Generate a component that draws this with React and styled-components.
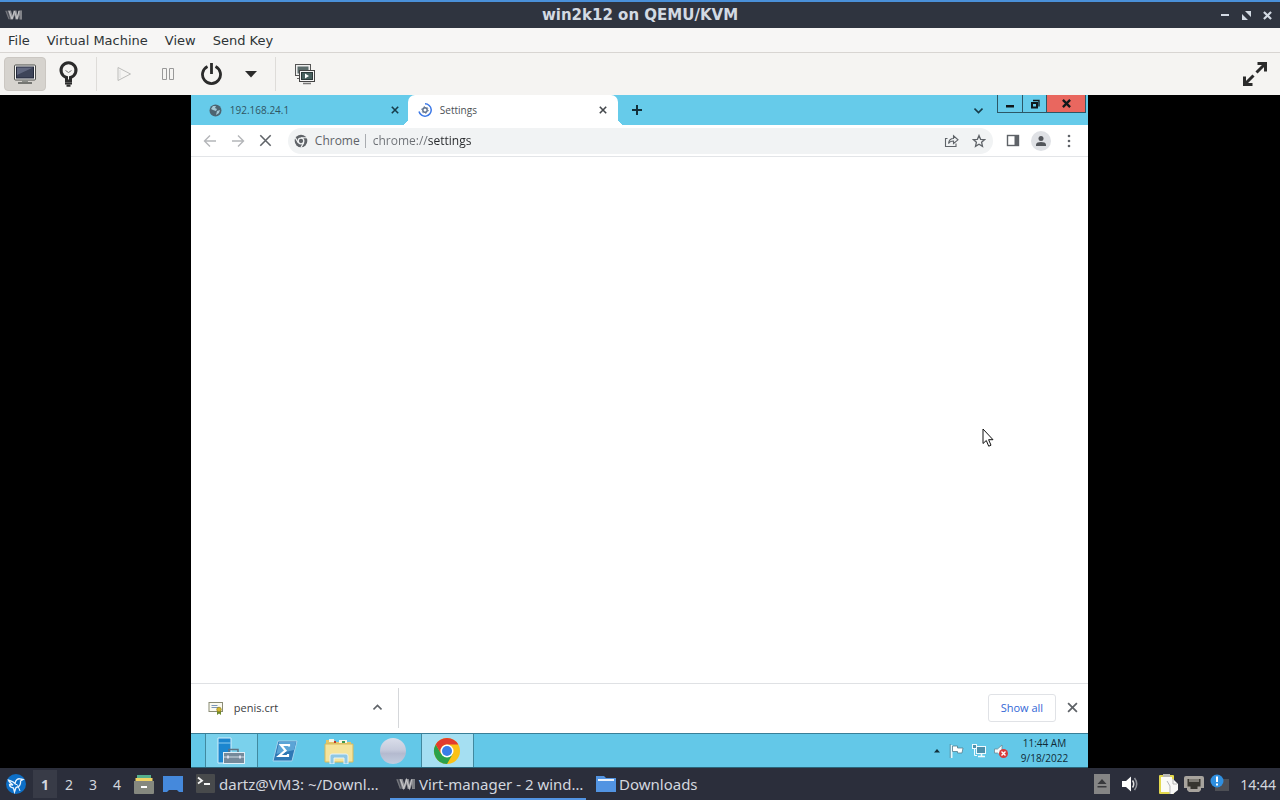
import React from "react";
import styled, { createGlobalStyle } from "styled-components";

const GlobalStyle = createGlobalStyle`
  * {
    box-sizing: border-box;
  }
  body {
    margin: 0;
    background: #000;
  }
  button, input {
    font: inherit;
    color: inherit;
    border: none;
    background: none;
    padding: 0;
    margin: 0;
  }
  svg {
    display: block;
    flex: none;
  }
`;

const Screen = styled.div`
  display: flex;
  flex-direction: column;
  height: 100vh;
  overflow: hidden;
  font-family: "DejaVu Sans", sans-serif;
`;

/* ---- host window ---- */

const TitleBar = styled.header`
  display: grid;
  grid-template-columns: 1fr auto 1fr;
  align-items: center;
  flex: none;
  height: 28px;
  padding: 0 5px;
  border-top: 2px solid #4a90d9;
  background: #2f343f;
  color: #d3dae3;
`;

const WindowTitle = styled.h1`
  margin: 0;
  font-size: 15px;
  line-height: 26px;
  font-weight: bold;
`;

const TitleButtons = styled.div`
  display: flex;
  justify-content: flex-end;
  gap: 5px;
`;

const TitleButton = styled.button`
  display: grid;
  place-items: center;
  width: 16px;
  height: 20px;
`;

const MenuBar = styled.nav`
  display: flex;
  flex: none;
  gap: 1px;
  height: 25px;
  background: #f7f6f5;
  border-bottom: 1px solid #d8d5d2;
`;

const MenuItem = styled.button`
  padding: 1px 8px 0;
  font-size: 13px;
  line-height: 24px;
  color: #2e3436;
`;

const ToolBar = styled.div`
  display: flex;
  align-items: center;
  flex: none;
  gap: 2px;
  height: 42px;
  padding: 0 4px;
  background: #f5f4f2;
  color: #2b2b2b;
`;

const ToolButton = styled.button`
  display: grid;
  place-items: center;
  width: ${p => (p.$narrow ? 32 : 42)}px;
  height: 34px;
  border-radius: 4px;
  background: ${p => (p.$active ? "#d6d3ce" : "transparent")};
  border: 1px solid ${p => (p.$active ? "#cbc7c2" : "transparent")};
  color: ${p => (p.disabled ? "#bcbcba" : "#2b2b2b")};
`;

const ToolDivider = styled.span`
  width: 1px;
  height: 34px;
  margin: 0 ${p => (p.$wide ? 6 : 4)}px;
  background: #dedcd9;
`;

const Spacer = styled.span`
  flex: 1;
`;

const Viewer = styled.main`
  display: flex;
  justify-content: center;
  flex: 1;
  min-height: 0;
  padding-right: 1px;
  background: #000;
`;

/* ---- guest desktop ---- */

const Guest = styled.div`
  display: flex;
  flex-direction: column;
  height: 100%;
  aspect-ratio: 4 / 3;
  background: #fff;
  font-family: "Open Sans", "Noto Sans", sans-serif;
`;

const TabStrip = styled.div`
  display: flex;
  flex: none;
  height: 30px;
  background: #66cbea;
  color: #24424e;
`;

const Tab = styled.div`
  position: relative;
  display: flex;
  align-items: center;
  gap: 8px;
  width: ${p => (p.$active ? 210 : 217)}px;
  padding: ${p => (p.$active ? "0 8px 0 10px" : "0 6px 0 18px")};
  border-radius: 7px 7px 0 0;
  background: ${p => (p.$active ? "#fff" : "transparent")};
  color: ${p => (p.$active ? "#4b4f54" : "#2f5563")};
  font-size: 10px;

  &::before,
  &::after {
    content: "";
    display: ${p => (p.$active ? "block" : "none")};
    position: absolute;
    bottom: 0;
    width: 7px;
    height: 7px;
  }
  &::before {
    right: 100%;
    background: radial-gradient(circle at 0 0, transparent 7px, #fff 7px);
  }
  &::after {
    left: 100%;
    background: radial-gradient(circle at 100% 0, transparent 7px, #fff 7px);
  }
`;

const TabTitle = styled.span`
  flex: 1;
`;

const IconButton = styled.button`
  display: grid;
  place-items: center;
  width: ${p => p.$size || 28}px;
  height: ${p => p.$size || 28}px;
  border-radius: 50%;
  color: ${p => p.$color || "#5f6368"};
`;

const TabTool = styled(IconButton)`
  align-self: center;
  margin: 0 ${p => (p.$last ? 5 : 0)}px 0 5px;
`;

const Captions = styled.div`
  display: flex;
  height: 18px;
  margin-right: 2px;
  border: 1px solid #2c5766;
  border-top: none;
`;

const Caption = styled.button`
  display: grid;
  place-items: center;
  width: ${p => (p.$close ? 39 : 24)}px;
  background: ${p => (p.$close ? "#e9675f" : "transparent")};
  border-left: ${p => (p.$first ? "none" : "1px solid #2c5766")};
  color: #10181b;
`;

const NavBar = styled.div`
  display: flex;
  align-items: center;
  flex: none;
  height: 32px;
  padding: 0 5px;
  border-bottom: 1px solid #e3e5e8;
`;

const Omnibox = styled.label`
  display: flex;
  align-items: center;
  flex: 1;
  height: 26px;
  margin: 0 6px 0 8px;
  padding: 0 0 0 6px;
  border-radius: 13px;
  background: #f1f3f4;
  color: #5f6368;
  font-size: 12px;
`;

const Scheme = styled.span`
  margin-left: 7px;
  padding-right: 5px;
  line-height: 14px;
  border-right: 1px solid #a9acb0;
`;

const Address = styled.input`
  flex: 1;
  min-width: 0;
  margin-left: 7px;
  color: transparent;
  background: linear-gradient(90deg, #6b6f74 54px, #26282b 54px);
  background-clip: text;
  outline: none;
`;

const Avatar = styled.span`
  display: grid;
  place-items: center;
  width: 20px;
  height: 20px;
  border-radius: 50%;
  background: #dfe1e5;
`;

const Page = styled.section`
  position: relative;
  flex: 1;
`;

const Pointer = styled.svg`
  position: absolute;
  left: 88.2%;
  top: 51.6%;
`;

const DownloadBar = styled.div`
  display: flex;
  align-items: center;
  flex: none;
  height: 50px;
  padding: 0 4px 2px 17px;
  border-top: 1px solid #dfe1e4;
`;

const DownloadItem = styled.div`
  display: flex;
  align-items: center;
  gap: 10px;
  width: 191px;
  height: 40px;
  padding-right: 6px;
  border-right: 1px solid #d5d7da;
  font-size: 11px;
  color: #3c4043;
`;

const ShowAll = styled.button`
  height: 28px;
  padding: 0 12px;
  margin-right: 4px;
  border: 1px solid #e0e2e6;
  border-radius: 3px;
  color: #3367d6;
  font-size: 11px;
`;

const TaskBar = styled.div`
  display: flex;
  flex: none;
  gap: 1px;
  height: 35px;
  padding-left: 14px;
  border-top: 1px solid #3a7f98;
  border-bottom: 1px solid #2b6579;
  background: #63c8e8;
`;

const TaskIcon = styled.button`
  display: grid;
  place-items: center;
  width: 53px;
  background: ${p => (p.$lit ? "#a5dff2" : p.$open ? "#7ad1ec" : "transparent")};
  border: solid ${p => (p.$lit || p.$open ? "#41899f" : "transparent")};
  border-width: 0 1px;
`;

const Tray = styled.div`
  display: flex;
  align-items: center;
  gap: 6px;
  padding-right: 20px;
`;

const TrayClock = styled.time`
  margin-left: 6px;
  font-size: 10px;
  line-height: 15px;
  text-align: center;
  color: #102b36;
`;

/* ---- host panel ---- */

const Panel = styled.footer`
  display: flex;
  align-items: center;
  flex: none;
  height: 32px;
  padding: 0 4px 0 6px;
  background: #2b2e3b;
  color: #d3d7df;
  font-family: "Noto Sans", "Open Sans", sans-serif;
  font-size: 14px;
`;

const Desktops = styled.div`
  display: flex;
  margin: 0 5px 0 7px;
`;

const DesktopButton = styled.button`
  width: 24px;
  height: 28px;
  background: ${p => (p.$current ? "#383b47" : "transparent")};
  font-weight: ${p => (p.$current ? "bold" : "normal")};
`;

const Launchers = styled.div`
  display: flex;
  align-items: center;
  gap: 9px;
  margin-right: 7px;
`;

const Task = styled.button`
  display: flex;
  align-items: center;
  gap: 3px;
  width: 196px;
  height: 32px;
  margin-right: 4px;
  padding: 2px 6px 0;
  border-bottom: 2px solid ${p => (p.$current ? "#5294e2" : "transparent")};
  font-size: 15px;
  white-space: nowrap;
`;

const Status = styled.div`
  display: flex;
  align-items: center;
  gap: ${p => (p.$wide ? 10 : 6)}px;
  margin-right: ${p => (p.$wide ? 18 : 10)}px;
`;

const VmLogo = ({ width = 18, height = 12 }) => (
  <svg width={width} height={height} viewBox="0 0 18 12" fill="none">
    <path d="M0 1.500h4l3 9H3.500z" fill="#4b4e58" />
    <path d="M3 1.500h3l1.500 5 1-5h3l1 5 1-5H17v9h-2.500V6L13 10.500h-2.500L9.500 6l-1.500 4.500H5.500z" fill="#8d8e93" />
    <path d="M4 2l3 8 2.500-8 2.500 8 2-8" stroke="#c6c6c9" strokeWidth="1" />
    <path d="M1 2l3 8M16 2v8" stroke="#77797f" strokeWidth="1" />
  </svg>
);

const Cross = ({ size = 8, weight = 1.6 }) => (
  <svg width={size} height={size} viewBox="0 0 10 10">
    <path d="M1 1l8 8M9 1L1 9" stroke="currentColor" strokeWidth={weight} />
  </svg>
);

const Monitor = () => (
  <svg width="24" height="22" viewBox="0 0 24 22">
    <rect x="1.500" y="2" width="21" height="15" rx="1" fill="#f6f6f4" stroke="#4b4d4a" />
    <rect x="3.500" y="4" width="17" height="11" fill="#3e4559" stroke="#22283a" />
    <path d="M4 4.500h16L4 12z" fill="#79809a" opacity=".6" />
    <path d="M9 17h6v2H9z" fill="#8b8d89" />
    <path d="M5 20h14" stroke="#555753" strokeWidth="1.500" />
  </svg>
);

const Bulb = () => (
  <svg width="22" height="26" viewBox="0 0 22 26" fill="none" stroke="currentColor">
    <path d="M8.500 20v-3.500a7.500 7.500 0 1 1 4 0V20z" strokeWidth="3" />
    <path d="M7.500 9.500l3 2 3-2" strokeWidth="1" stroke="#777" />
    <path d="M7 22.500h7M8.500 24.800h4" strokeWidth="2" />
  </svg>
);

const Play = () => (
  <svg width="16" height="16" viewBox="0 0 16 16" fill="none" stroke="currentColor">
    <path d="M2 1.500v13L14.500 8z" />
    <path d="M4 4v8" stroke="#ddd" />
  </svg>
);

const Pause = () => (
  <svg width="14" height="14" viewBox="0 0 14 14" fill="none" stroke="#999">
    <path d="M1.500 1.500h4v11h-4zM8.500 1.500h4v11h-4z" />
  </svg>
);

const Power = () => (
  <svg width="22" height="24" viewBox="0 0 22 24" fill="none" stroke="currentColor" strokeWidth="2.800">
    <path d="M6.500 4.500a9 9 0 1 0 8 0M10.500 1v11" />
  </svg>
);

const Snapshots = () => (
  <svg width="22" height="22" viewBox="0 0 22 22">
    <rect x="1.500" y="1.500" width="15" height="11" fill="#eee" stroke="#555" />
    <rect x="3.500" y="3.500" width="11" height="7" fill="#5b6b6b" />
    <path d="M3 15.500h4" stroke="#666" />
    <rect x="5.500" y="7.500" width="15" height="11" fill="#f5f5f5" stroke="#444" />
    <rect x="7.500" y="9.500" width="11" height="7" fill="#47605e" stroke="#2b3838" />
    <path d="M11 10.500v5l4-2.500z" fill="#fff" />
    <path d="M9 20.500h8" stroke="#777" strokeWidth="1.500" />
  </svg>
);

const Fullscreen = () => (
  <svg width="26" height="26" viewBox="0 0 26 26" stroke="currentColor" fill="none">
    <path d="M14.500 11.500L23 3M11.500 14.500L3 23" strokeWidth="3" />
    <path d="M15.500 2.500h8v8M10.500 23.500h-8v-8" strokeWidth="3" />
  </svg>
);

const Globe = () => (
  <svg width="13" height="13" viewBox="0 0 13 13">
    <circle cx="6.500" cy="6.500" r="6" fill="#4d6470" />
    <path d="M2 5l2-3 3 0-1 2 2 1-1 2-3-1zM8 7l3-1-1 3-3 2z" fill="#a5c8d4" />
  </svg>
);

const SettingsSpinner = () => (
  <svg width="14" height="14" viewBox="0 0 14 14" fill="none">
    <path d="M7 .8a6.200 6.200 0 1 1-6 7.700" stroke="#3b78e7" strokeWidth="1.500" />
    <circle cx="7" cy="7" r="2.200" stroke="#5c6f8c" strokeWidth="1.400" />
    <circle cx="7" cy="7" r="3.300" stroke="#5c6f8c" strokeDasharray="1.300 2.155" />
  </svg>
);

const ChromeMono = () => (
  <svg width="14" height="14" viewBox="0 0 14 14" fill="none">
    <circle cx="7" cy="7" r="6.300" fill="#5f6368" />
    <circle cx="7" cy="7" r="2.800" fill="#5f6368" stroke="#f1f3f4" strokeWidth="1.300" />
    <path d="M7 3.800h6M4.200 8.600L1.400 3.900M9.800 8.600L7 13.400" stroke="#f1f3f4" strokeWidth="1.100" />
  </svg>
);

const Arrow = ({ flip }) => (
  <svg width="14" height="14" viewBox="0 0 14 14" fill="none" stroke="currentColor" strokeWidth="1.400">
    <path d={flip ? "M1 7h11M7 1.500L12.500 7 7 12.500" : "M13 7H2M7 1.500L1.500 7 7 12.500"} />
  </svg>
);

const Share = () => (
  <svg width="15" height="14" viewBox="0 0 15 14" fill="none" stroke="currentColor" strokeWidth="1.100">
    <path d="M3.500 4.500H1.500v8h10.500v-3" />
    <path d="M4.500 9.500c.5-3.500 2-5 5-5V1.800L14 5.800 9.500 9.500V7c-2.500 0-4 .8-5 2.500z" />
  </svg>
);

const Star = () => (
  <svg width="14" height="14" viewBox="0 0 14 14" fill="none" stroke="currentColor" strokeWidth="1.300">
    <path d="M7 1.500l1.600 3.800 4 .3-3 2.700.9 4L7 10.200l-3.500 2.100.9-4-3-2.700 4-.3z" />
  </svg>
);

const SidePanel = () => (
  <svg width="14" height="13" viewBox="0 0 14 13">
    <rect x="1.500" y="1.500" width="11" height="10" fill="none" stroke="currentColor" strokeWidth="1.400" />
    <path d="M8.500 1h4v11h-4z" fill="currentColor" />
  </svg>
);

const Person = () => (
  <svg width="12" height="12" viewBox="0 0 12 12" fill="#53565b">
    <circle cx="6" cy="3.500" r="2.500" />
    <path d="M1 11V9.500C1 7.800 3.500 7 6 7s5 .8 5 2.500V11z" />
  </svg>
);

const Chevron = ({ up }) => (
  <svg width="9" height="7" viewBox="0 0 9 7" fill="none" stroke="currentColor" strokeWidth="1.600">
    <path d={up ? "M.5 5.500l4-4 4 4" : "M.5 1.500l4 4 4-4"} />
  </svg>
);

const Certificate = () => (
  <svg width="16" height="14" viewBox="0 0 16 14">
    <rect x="1" y="1.500" width="13.500" height="9" fill="#fbfaf0" stroke="#8a8b75" />
    <path d="M3.500 4.500h6M3.500 6.500h8" stroke="#7b96b8" />
    <path d="M9 9h4v5l-2-1.500L9 14z" fill="#6c8a2e" />
    <circle cx="11" cy="8.500" r="2.300" fill="#d3b72c" stroke="#8a7a1c" strokeWidth=".6" />
  </svg>
);

const ServerManager = () => (
  <svg width="28" height="28" viewBox="0 0 28 28">
    <path d="M1 1h13v25H1z" fill="#1b86cf" stroke="#d5eefa" />
    <path d="M1 6h13" stroke="#8bcdf2" />
    <path d="M12 15v-2.500h9V15" fill="none" stroke="#5f7281" strokeWidth="1.500" />
    <rect x="6.500" y="15.500" width="21" height="11" fill="#75899a" stroke="#e0eef6" />
    <path d="M7 20h20" stroke="#d1dde4" />
    <path d="M11 18.500v3M23 18.500v3" stroke="#eef" strokeWidth="1.500" />
  </svg>
);

const PowerShell = () => (
  <svg width="26" height="22" viewBox="0 0 26 22">
    <path d="M6 1h19l-5 20H1z" fill="#2e78b5" stroke="#a5d4ee" />
    <path d="M7 2h17l-2 8L4.500 14z" fill="#5ba4d6" />
    <path d="M17 6.500V5H9l4.500 5.500L7 16h9v-2" fill="none" stroke="#fff" strokeWidth="2.200" />
  </svg>
);

const Explorer = () => (
  <svg width="30" height="26" viewBox="0 0 30 26">
    <path d="M2 2h8l2 2h15v20H2z" fill="#e3c768" />
    <path d="M5 1h5v3H5zM15 2h8v3h-8z" fill="#f8f5e4" />
    <path d="M10 3h2v2h-2z" fill="#c0392b" />
    <path d="M18 3h3v2h-3z" fill="#3c9a51" />
    <path d="M1 6h28v18H1z" fill="#f5e49c" stroke="#d7b95c" />
    <path d="M6 26v-8q0-2 2-2h14q2 0 2 2v8h-4v-6H10v6z" fill="#8fc7e4" stroke="#e3f3fb" />
  </svg>
);

const Sphere = () => (
  <svg width="28" height="28" viewBox="0 0 28 28">
    <defs>
      <linearGradient id="sphere" x1="0" y1="0" x2="0" y2="1">
        <stop offset="0" stopColor="#dadeea" />
        <stop offset=".45" stopColor="#c6cbdc" />
        <stop offset=".6" stopColor="#b4bacf" />
        <stop offset="1" stopColor="#c3cddf" />
      </linearGradient>
    </defs>
    <circle cx="14" cy="14" r="13" fill="url(#sphere)" />
  </svg>
);

const ChromeColor = () => (
  <svg width="28" height="28" viewBox="0 0 28 28">
    <circle cx="14" cy="14" r="13" fill="#fbc116" />
    <path d="M2.740 7.500A13 13 0 0 0 14 27l5.630-9.750L8.370 17.250z" fill="#2ba14b" />
    <path d="M2.740 7.500a13 13 0 0 1 22.520 0H14a6.500 6.500 0 0 0-5.630 9.750z" fill="#e33b2e" />
    <circle cx="14" cy="14" r="6.500" fill="#fff" />
    <circle cx="14" cy="14" r="5" fill="#3a7de8" />
  </svg>
);

const Flag = () => (
  <svg width="16" height="16" viewBox="0 0 16 16">
    <path d="M2.500 2v13" stroke="#e9f6fb" strokeWidth="2" />
    <path d="M3.500 3h5v2h5.500l-1 5H8.500V8.500h-5z" fill="#fff" stroke="#537e8e" strokeWidth=".8" />
    <path d="M1.200 1v14" stroke="#537e8e" strokeWidth=".7" />
  </svg>
);

const Network = () => (
  <svg width="16" height="16" viewBox="0 0 16 16" fill="#4f91ac" stroke="#f1fafd">
    <rect x="5.500" y="3.500" width="9" height="7" />
    <path d="M7 13.500h7M10.500 11v2" fill="none" strokeWidth="1.500" />
    <rect x="1.500" y="1.500" width="4" height="4" />
    <path d="M3.500 6v6.500H6" fill="none" />
  </svg>
);

const MutedSpeaker = () => (
  <svg width="16" height="16" viewBox="0 0 16 16">
    <path d="M1.500 6h3L9 2v12l-4.500-4h-3z" fill="#f3fafc" stroke="#65808b" strokeWidth=".7" />
    <circle cx="10.500" cy="10.500" r="4.500" fill="#d93a3a" />
    <path d="M8.500 8.500l4 4M12.500 8.500l-4 4" stroke="#fff" strokeWidth="1.400" />
  </svg>
);

const Bird = () => (
  <svg width="20" height="20" viewBox="0 0 20 20">
    <circle cx="10" cy="10" r="10" fill="#0d6fc7" />
    <path
      d="M2.500 6c2.500 1 5 1.500 6.500 3.500C9.500 6 12 4 14.500 5l2.500.5-2.500 1.500c.5 4-2 6-4.500 6.500L8.500 18l-1-4C5 13.500 3.500 12 3.500 10.500L7 11C5 9.500 3 8 2.500 6z"
      fill="none"
      stroke="#e8f4ff"
      strokeWidth="1.300"
    />
    <path d="M12 12l2 5M9 9.500l3 2" stroke="#e8f4ff" />
  </svg>
);

const Cabinet = () => (
  <svg width="20" height="20" viewBox="0 0 20 20">
    <path d="M3 1h14v4H3z" fill="#55b08d" />
    <path d="M1.500 4h17v4h-17z" fill="#f0d264" />
    <path d="M0 7h20v12q0 1-1 1H1q-1 0-1-1z" fill="#85887f" />
    <path d="M7 12h6v2H7z" fill="#fff" />
  </svg>
);

const DesktopGlyph = () => (
  <svg width="20" height="18" viewBox="0 0 20 18">
    <path d="M0 1h20v16h-4l-2-2H6l-2 2H0z" fill="#4589dc" />
  </svg>
);

const Terminal = () => (
  <svg width="20" height="20" viewBox="0 0 20 20">
    <rect width="19" height="19" rx="1" fill="#484a4c" />
    <path d="M2 3.500l4 3.200-4 2.800M8 10h6" stroke="#f5f5f5" strokeWidth="1.800" fill="none" />
  </svg>
);

const Folder = () => (
  <svg width="20" height="18" viewBox="0 0 20 18">
    <path d="M0 1h8l2 2h10v14H0z" fill="#5294e2" />
    <path d="M2 4h16v2H2z" fill="#e9f1fb" />
  </svg>
);

const Eject = () => (
  <svg width="16" height="20" viewBox="0 0 16 20">
    <rect width="16" height="20" fill="#858585" />
    <path d="M3.500 10L8 5l4.500 5zM3.500 12h9v1.500h-9z" fill="#38393c" />
  </svg>
);

const Speaker = () => (
  <svg width="20" height="18" viewBox="0 0 20 18">
    <path d="M2 6h4l5-4.500v15L6 12H2z" fill="#fff" />
    <path d="M12.500 5.500q2.500 3.500 0 7" stroke="#e0e0e0" strokeWidth="1.500" fill="none" />
    <path d="M14.500 3q4.500 6 0 12" stroke="#909299" strokeWidth="1.500" fill="none" />
  </svg>
);

const Clipboard = () => (
  <svg width="20" height="22" viewBox="0 0 20 22">
    <rect x="1" y="2" width="15" height="19" rx="1" fill="#e3d84d" />
    <path d="M3 4h11v15H3z" fill="#fbfbf6" />
    <path d="M5 1h7v3H5z" fill="#b8b8b4" />
    <path d="M9 8l6-2 5 5v6l-5 4h-3z" fill="#f8f8f8" />
    <path d="M9 8l3 5v8M15 6v5h4" stroke="#b5b5b5" fill="none" />
  </svg>
);

const Ethernet = () => (
  <svg width="20" height="18" viewBox="0 0 20 18">
    <path d="M2 1h16q2 0 2 2v10h-3v2l-2 2H5l-2-2v-2H0V3q0-2 2-2z" fill="#a7a39d" />
    <path d="M3.500 4h13v7.500h-3V14h-7v-2.500h-3z" fill="#37352f" />
    <path d="M6 4v3M8 4v3M10 4v3M12 4v3M14 4v3" stroke="#c4c0b8" />
  </svg>
);

const Updates = () => (
  <svg width="20" height="20" viewBox="0 0 20 20">
    <rect x="5" y="5" width="14" height="12" fill="#4d4f55" />
    <circle cx="7" cy="7" r="6.500" fill="#2f8fe0" />
    <path d="M7 2.500v5.500M7 9.500v2" stroke="#fff" strokeWidth="2" />
  </svg>
);

const menus = ["File", "Virtual Machine", "View", "Send Key"];

const GuestDesktop = () => (
  <Guest>
    <TabStrip>
      <Tab>
        <Globe />
        <TabTitle>192.168.24.1</TabTitle>
        <IconButton $size={14} $color="#173d4b" aria-label="Close tab">
          <Cross weight={2} />
        </IconButton>
      </Tab>
      <Tab $active>
        <SettingsSpinner />
        <TabTitle>Settings</TabTitle>
        <IconButton $size={14} $color="#44484c" aria-label="Close tab">
          <Cross weight={2} />
        </IconButton>
      </Tab>
      <TabTool $color="#12303b" aria-label="New tab">
        <svg width="12" height="12" viewBox="0 0 12 12">
          <path d="M6 1v10M1 6h10" stroke="currentColor" strokeWidth="2" />
        </svg>
      </TabTool>
      <Spacer />
      <TabTool $last $color="#173d4b" aria-label="Search tabs">
        <Chevron />
      </TabTool>
      <Captions>
        <Caption $first aria-label="Minimize">
          <svg width="10" height="10" viewBox="0 0 10 10">
            <path d="M1 6h8v2.500H1z" fill="currentColor" />
          </svg>
        </Caption>
        <Caption aria-label="Restore">
          <svg width="10" height="10" viewBox="0 0 10 10" fill="none" stroke="currentColor">
            <path d="M3 1.500h6v6" strokeWidth="1.300" />
            <path d="M2 4h5v4.500H2z" strokeWidth="2" />
          </svg>
        </Caption>
        <Caption $close aria-label="Close">
          <Cross size={9} weight={2.6} />
        </Caption>
      </Captions>
    </TabStrip>

    <NavBar>
      <IconButton $color="#b4b6b9" aria-label="Back">
        <Arrow />
      </IconButton>
      <IconButton $color="#b4b6b9" aria-label="Forward">
        <Arrow flip />
      </IconButton>
      <IconButton aria-label="Stop loading">
        <Cross size={13} weight={1.2} />
      </IconButton>
      <Omnibox>
        <ChromeMono />
        <Scheme>Chrome</Scheme>
        <Address type="text" aria-label="Address" defaultValue="chrome://settings" />
        <IconButton aria-label="Share">
          <Share />
        </IconButton>
        <IconButton aria-label="Bookmark">
          <Star />
        </IconButton>
      </Omnibox>
      <IconButton aria-label="Side panel">
        <SidePanel />
      </IconButton>
      <IconButton aria-label="Profile">
        <Avatar>
          <Person />
        </Avatar>
      </IconButton>
      <IconButton aria-label="More">
        <svg width="4" height="14" viewBox="0 0 4 14" fill="currentColor">
          <circle cx="2" cy="2" r="1.300" />
          <circle cx="2" cy="7" r="1.300" />
          <circle cx="2" cy="12" r="1.300" />
        </svg>
      </IconButton>
    </NavBar>

    <Page>
      <Pointer width="12" height="20" viewBox="0 0 12 20">
        <path d="M1 1v14.500l3.300-3 2.400 5.700 2.300-1-2.400-5.500H11z" fill="#fff" stroke="#111" />
      </Pointer>
    </Page>

    <DownloadBar>
      <DownloadItem>
        <Certificate />
        <TabTitle>penis.crt</TabTitle>
        <IconButton aria-label="Download options">
          <Chevron up />
        </IconButton>
      </DownloadItem>
      <Spacer />
      <ShowAll>Show all</ShowAll>
      <IconButton $size={24} aria-label="Close downloads">
        <Cross size={11} />
      </IconButton>
    </DownloadBar>

    <TaskBar>
      <TaskIcon $open aria-label="Server Manager">
        <ServerManager />
      </TaskIcon>
      <TaskIcon aria-label="PowerShell">
        <PowerShell />
      </TaskIcon>
      <TaskIcon aria-label="File Explorer">
        <Explorer />
      </TaskIcon>
      <TaskIcon aria-label="Application">
        <Sphere />
      </TaskIcon>
      <TaskIcon $lit aria-label="Chrome">
        <ChromeColor />
      </TaskIcon>
      <Spacer />
      <Tray>
        <svg width="12" height="5" viewBox="0 0 12 5">
          <path d="M3 4.500L6 1l3 3.500z" fill="#12303b" />
        </svg>
        <Flag />
        <Network />
        <MutedSpeaker />
        <TrayClock>
          11:44 AM
          <br />
          9/18/2022
        </TrayClock>
      </Tray>
    </TaskBar>
  </Guest>
);

const App = () => (
  <Screen>
    <GlobalStyle />
    <TitleBar>
      <VmLogo />
      <WindowTitle>win2k12 on QEMU/KVM</WindowTitle>
      <TitleButtons>
        <TitleButton aria-label="Minimize">
          <svg width="8" height="8" viewBox="0 0 8 8">
            <path d="M0 3h8v2H0z" fill="currentColor" />
          </svg>
        </TitleButton>
        <TitleButton aria-label="Maximize">
          <svg width="9" height="9" viewBox="0 0 9 9" fill="currentColor">
            <path d="M3 0h6v6zM0 3l6 6H0z" />
          </svg>
        </TitleButton>
        <TitleButton aria-label="Close">
          <Cross size={9} weight={2.4} />
        </TitleButton>
      </TitleButtons>
    </TitleBar>

    <MenuBar>
      {menus.map(menu => (
        <MenuItem key={menu}>{menu}</MenuItem>
      ))}
    </MenuBar>

    <ToolBar>
      <ToolButton $active aria-label="Console">
        <Monitor />
      </ToolButton>
      <ToolButton aria-label="Details">
        <Bulb />
      </ToolButton>
      <ToolDivider />
      <ToolButton disabled aria-label="Run">
        <Play />
      </ToolButton>
      <ToolButton disabled aria-label="Pause">
        <Pause />
      </ToolButton>
      <ToolButton aria-label="Shut down">
        <Power />
      </ToolButton>
      <ToolButton $narrow aria-label="Shut down menu">
        <svg width="12" height="7" viewBox="0 0 12 7">
          <path d="M0 0h12L6 6.500z" fill="currentColor" />
        </svg>
      </ToolButton>
      <ToolDivider $wide />
      <ToolButton aria-label="Snapshots">
        <Snapshots />
      </ToolButton>
      <Spacer />
      <ToolButton aria-label="Fullscreen">
        <Fullscreen />
      </ToolButton>
    </ToolBar>

    <Viewer>
      <GuestDesktop />
    </Viewer>

    <Panel>
      <Bird />
      <Desktops>
        {[1, 2, 3, 4].map(n => (
          <DesktopButton key={n} $current={n === 1}>
            {n}
          </DesktopButton>
        ))}
      </Desktops>
      <Launchers>
        <Cabinet />
        <DesktopGlyph />
      </Launchers>
      <Task>
        <Terminal />
        dartz@VM3: ~/Downl…
      </Task>
      <Task $current>
        <VmLogo width={20} height={14} />
        Virt-manager - 2 wind…
      </Task>
      <Task>
        <Folder />
        Downloads
      </Task>
      <Spacer />
      <Status $wide>
        <Eject />
        <Speaker />
      </Status>
      <Status>
        <Clipboard />
        <Ethernet />
        <Updates />
      </Status>
      <time>14:44</time>
    </Panel>
  </Screen>
);

export default App;
